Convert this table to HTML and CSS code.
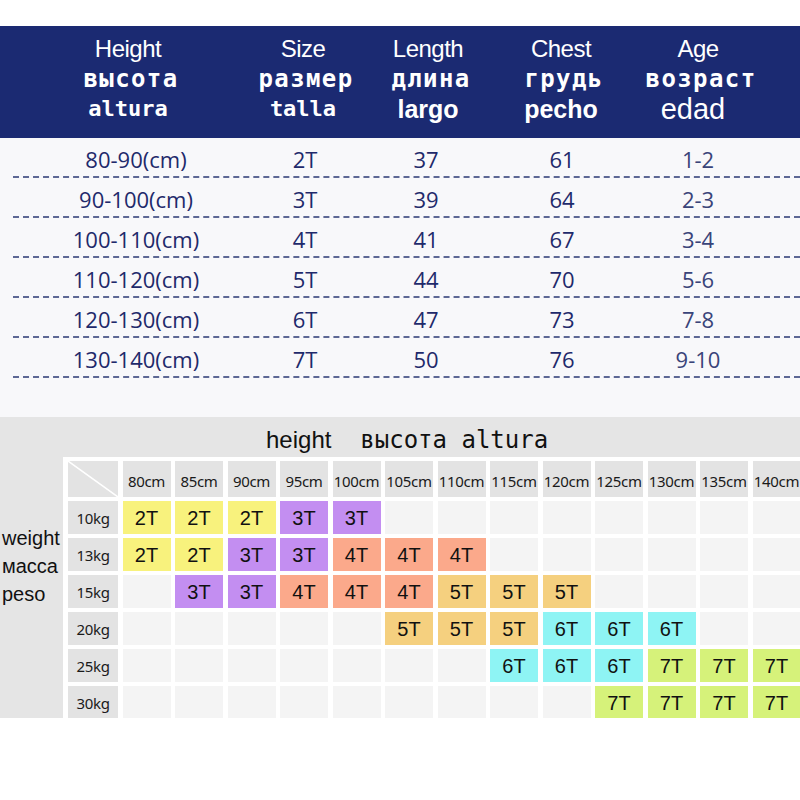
FILE: index.html
```html
<!DOCTYPE html>
<html>
<head>
<meta charset="utf-8">
<link rel="stylesheet" href="styles.css">
</head>
<body>
<div class="page">
  <div class="topgap"></div>
  <div class="head">
    <div class="hcol">
      <span class="l1">Height</span>
      <span class="ru">высота</span>
      <span class="es mono">altura</span>
    </div>
    <div class="hcol">
      <span class="l1">Size</span>
      <span class="ru">размер</span>
      <span class="es mono">talla</span>
    </div>
    <div class="hcol">
      <span class="l1">Length</span>
      <span class="ru">длина</span>
      <span class="es sans">largo</span>
    </div>
    <div class="hcol">
      <span class="l1">Chest</span>
      <span class="ru">грудь</span>
      <span class="es sans">pecho</span>
    </div>
    <div class="hcol">
      <span class="l1">Age</span>
      <span class="ru">возраст</span>
      <span class="es big">edad</span>
    </div>
  </div>
  <div class="body">
    <div class="row"><span>80-90(cm)</span><span>2T</span><span>37</span><span>61</span><span class="age">1-2</span></div>
    <div class="row"><span>90-100(cm)</span><span>3T</span><span>39</span><span>64</span><span class="age">2-3</span></div>
    <div class="row"><span>100-110(cm)</span><span>4T</span><span>41</span><span>67</span><span class="age">3-4</span></div>
    <div class="row"><span>110-120(cm)</span><span>5T</span><span>44</span><span>70</span><span class="age">5-6</span></div>
    <div class="row"><span>120-130(cm)</span><span>6T</span><span>47</span><span>73</span><span class="age">7-8</span></div>
    <div class="row"><span>130-140(cm)</span><span>7T</span><span>50</span><span>76</span><span class="age">9-10</span></div>
  </div>
  <div class="panel">
    <div class="title"><span class="tw">height</span><span class="tm">  высота altura</span></div>
    <div class="side">weight<br>масса<br>peso</div>
    <div class="frame">
      <div class="grid">
        <div class="hd diag"><svg width="50" height="36" viewBox="0 0 50 36"><line x1="0" y1="0" x2="50" y2="36" stroke="#fff" stroke-width="1.5"/></svg></div>
        <div class="hd">80cm</div><div class="hd">85cm</div><div class="hd">90cm</div><div class="hd">95cm</div><div class="hd">100cm</div><div class="hd">105cm</div><div class="hd">110cm</div><div class="hd">115cm</div><div class="hd">120cm</div><div class="hd">125cm</div><div class="hd">130cm</div><div class="hd">135cm</div><div class="hd">140cm</div>

        <div class="lb">10kg</div>
        <div class="c y">2T</div><div class="c y">2T</div><div class="c y">2T</div><div class="c p">3T</div><div class="c p">3T</div><div class="c"></div><div class="c"></div><div class="c"></div><div class="c"></div><div class="c"></div><div class="c"></div><div class="c"></div><div class="c"></div>

        <div class="lb">13kg</div>
        <div class="c y">2T</div><div class="c y">2T</div><div class="c p">3T</div><div class="c p">3T</div><div class="c s">4T</div><div class="c s">4T</div><div class="c s">4T</div><div class="c"></div><div class="c"></div><div class="c"></div><div class="c"></div><div class="c"></div><div class="c"></div>

        <div class="lb">15kg</div>
        <div class="c"></div><div class="c p">3T</div><div class="c p">3T</div><div class="c s">4T</div><div class="c s">4T</div><div class="c s">4T</div><div class="c g">5T</div><div class="c g">5T</div><div class="c g">5T</div><div class="c"></div><div class="c"></div><div class="c"></div><div class="c"></div>

        <div class="lb">20kg</div>
        <div class="c"></div><div class="c"></div><div class="c"></div><div class="c"></div><div class="c"></div><div class="c g">5T</div><div class="c g">5T</div><div class="c g">5T</div><div class="c cy">6T</div><div class="c cy">6T</div><div class="c cy">6T</div><div class="c"></div><div class="c"></div>

        <div class="lb">25kg</div>
        <div class="c"></div><div class="c"></div><div class="c"></div><div class="c"></div><div class="c"></div><div class="c"></div><div class="c"></div><div class="c cy">6T</div><div class="c cy">6T</div><div class="c cy">6T</div><div class="c li">7T</div><div class="c li">7T</div><div class="c li">7T</div>

        <div class="lb">30kg</div>
        <div class="c"></div><div class="c"></div><div class="c"></div><div class="c"></div><div class="c"></div><div class="c"></div><div class="c"></div><div class="c"></div><div class="c"></div><div class="c li">7T</div><div class="c li">7T</div><div class="c li">7T</div><div class="c li">7T</div>
      </div>
    </div>
  </div>
</div>
</body>
</html>
```

FILE: styles.css
```css
* { box-sizing: border-box; }
html, body { margin: 0; padding: 0; background: #fff; }
.page { width: 800px; height: 800px; overflow: hidden; background: #fff; }
.topgap { height: 26px; background: #fff; }

.head {
  height: 112px;
  background: #1b2a72;
  color: #fff;
  display: grid;
  grid-template-columns: 174px 176px 74px 192px 82px;
  padding: 8px 0 0 41px;
}
.hcol { display: flex; flex-direction: column; align-items: center; }
.hcol span { display: block; height: 30px; line-height: 30px; white-space: nowrap; }
.l1 { font-family: "Liberation Sans", Arial, sans-serif; font-size: 24px; letter-spacing: -0.5px; }
.ru { font-family: "DejaVu Sans Mono", monospace; font-weight: bold; font-size: 24px; letter-spacing: 1.4px; padding-left: 6px; }
.es.mono { font-family: "DejaVu Sans Mono", monospace; font-weight: bold; font-size: 22px; }
.es.sans { font-family: "Liberation Sans", Arial, sans-serif; font-weight: bold; font-size: 25px; }
.es.big { font-family: "Liberation Sans", Arial, sans-serif; font-size: 29px; padding-right: 10px; }

.body { height: 279px; background: #f8f8fa; padding-left: 13px; }
.row {
  height: 40px;
  border-bottom: 2px dashed #5d6794;
  display: grid;
  grid-template-columns: 186px 152px 90px 182px 90px;
  padding: 3px 0 0 30px;
  align-items: center;
  font-family: "Open Sans", sans-serif;
  font-size: 22px;
  color: #1f2a6b;
}
.row span { display: flex; justify-content: center; white-space: nowrap; }
.row .age { color: #3a4479; }

.panel {
  height: 301px;
  background: #e5e5e5;
  display: grid;
  grid-template-columns: 63px 1fr;
  grid-template-rows: 40px 1fr;
}
.title {
  grid-column: 1 / 3;
  padding: 4px 0 0 266px;
  line-height: 38px;
  color: #111;
  white-space: pre;
}
.tw { font-family: "Liberation Sans", Arial, sans-serif; font-size: 24px; }
.tm { font-family: "DejaVu Sans Mono", monospace; font-size: 24px; }

.side {
  padding: 67px 0 0 2px;
  font-family: "Liberation Sans", Arial, sans-serif;
  font-size: 20px;
  line-height: 28px;
  color: #111;
}
.frame { background: #fff; padding: 4px 0 0 5px; overflow: hidden; }
.grid {
  display: grid;
  grid-template-columns: 50px repeat(13, 48px);
  grid-template-rows: 36px repeat(6, 33px);
  column-gap: 4.5px;
  row-gap: 4px;
  width: 740px;
}
.hd, .lb {
  background: #e3e3e3;
  display: flex; align-items: center; justify-content: center;
  font-family: "Noto Sans", sans-serif;
  font-size: 15px;
  color: #1a1a1a;
  white-space: nowrap;
  letter-spacing: -0.3px;
}
.hd { padding-top: 4px; }
.diag { padding: 0; }
.diag svg { display: block; }
.c {
  background: #f4f4f4;
  display: flex; align-items: center; justify-content: center;
  font-family: "Liberation Sans", Arial, sans-serif;
  font-size: 20px;
  color: #111;
  padding-top: 2px;
}
.c.y { background: #f8f27d; }
.c.p { background: #c38ef1; }
.c.s { background: #fba98b; }
.c.g { background: #f5d07f; }
.c.cy { background: #8ef4f4; }
.c.li { background: #d6f27a; }
```
